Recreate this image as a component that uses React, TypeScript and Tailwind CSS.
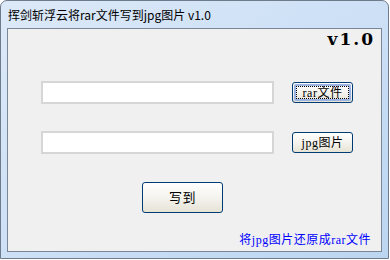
const cjk = { fontFamily: '"Noto Sans CJK SC", "Noto Sans", sans-serif' };
const song = { fontFamily: '"Liberation Serif", "Noto Sans CJK SC", serif' };

function XpButton({
  label,
  focused = false,
  className = "",
}: {
  label: string;
  focused?: boolean;
  className?: string;
}) {
  return (
    <button
      className={`flex items-center justify-center rounded-[3px] border border-[#003c74] bg-gradient-to-b from-white via-[#f4f3ee] to-[#e6e3d6] p-[1px] text-[12px] tracking-[0.5px] text-black ${className}`}
      style={song}
    >
      <span
        className={`flex h-full w-full items-center justify-center rounded-[2px] ${
          focused ? "border-2 border-[#9db4e2]" : ""
        }`}
      >
        <span
          className={`flex h-full w-full items-center justify-center ${
            focused ? "border border-dotted border-black" : ""
          }`}
        >
          {label}
        </span>
      </span>
    </button>
  );
}

export default function App() {
  return (
    <div className="h-[260px] w-[390px] bg-white">
      <div className="flex h-[259px] w-[389px] flex-col rounded-t-[7px] border border-[#6e7b8b] bg-gradient-to-br from-[#dce9f8] via-[#cde0f6] to-[#bcd5f1]">
        {/* Title bar */}
        <div className="flex h-[27px] items-center pl-[7px] text-[12px] text-black" style={cjk}>
          挥剑斩浮云将rar文件写到jpg图片 v1.0
        </div>

        {/* Client area */}
        <div className="mx-[6px] flex h-[224px] flex-col border border-[#7a8796] bg-[#f0f0f0]">
          <div
            className="flex justify-end pr-[6px] pt-[1px] text-[17px] font-bold leading-[18px] tracking-[2px] text-black"
            style={{ fontFamily: '"DejaVu Serif", "Liberation Serif", serif' }}
          >
            v1.0
          </div>

          <div className="mt-[33px] flex items-center pl-[33px]">
            <div className="h-[23px] w-[233px] border-2 border-[#d6d6d6] bg-white" />
            <XpButton label="rar文件" focused className="ml-[18px] h-[21px] w-[61px]" />
          </div>

          <div className="mt-[27px] flex items-center pl-[33px]">
            <div className="h-[23px] w-[233px] border-2 border-[#d6d6d6] bg-white" />
            <XpButton label="jpg图片" className="ml-[18px] h-[21px] w-[61px]" />
          </div>

          <div className="mt-[28px] flex pl-[134px]">
            <XpButton label="写到" className="h-[31px] w-[81px] text-[13px]" />
          </div>

          <div
            className="mt-[20px] flex justify-end pr-[10px] text-[12px] leading-[14px] tracking-[0.5px] text-[#0000ff]"
            style={song}
          >
            将jpg图片还原成rar文件
          </div>
        </div>
      </div>
    </div>
  );
}
